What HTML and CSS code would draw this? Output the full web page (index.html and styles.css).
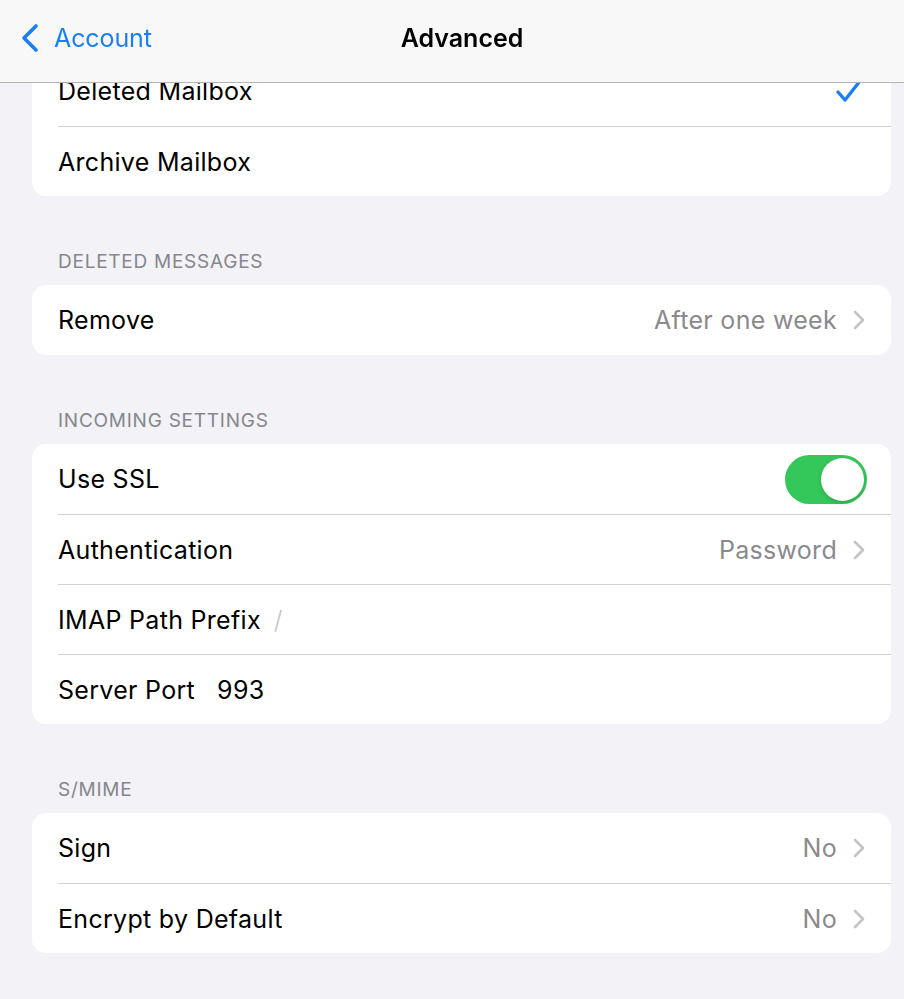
FILE: index.html
```html
<!DOCTYPE html>
<html>
<head>
<meta charset="utf-8">
<link rel="stylesheet" href="styles.css">
</head>
<body>
<header class="navbar">
  <div class="back">
    <svg class="back-icon" width="20" height="30" viewBox="0 0 20 30"><path d="M16 3 L4 15 L16 27" fill="none" stroke="#1a7ff5" stroke-width="3.6" stroke-linecap="round" stroke-linejoin="round"/></svg>
    <span>Account</span>
  </div>
  <div class="title">Advanced</div>
  <div></div>
</header>
<main class="content">
  <section class="card">
    <div class="row"><span class="label">Deleted Mailbox</span><svg class="check" width="28" height="26" viewBox="0 0 28 26"><path d="M3 14 L10 22 L25 3" fill="none" stroke="#1a7ff5" stroke-width="3.4" stroke-linecap="round" stroke-linejoin="round"/></svg></div>
    <div class="row"><span class="label">Archive Mailbox</span></div>
  </section>

  <h2 class="section-title">DELETED MESSAGES</h2>
  <section class="card">
    <div class="row"><span class="label">Remove</span><span class="value">After one week</span><svg class="chev" width="12" height="20" viewBox="0 0 12 20"><path d="M2 2 L10 10 L2 18" fill="none" stroke="#c4c4c7" stroke-width="2.6" stroke-linecap="round" stroke-linejoin="round"/></svg></div>
  </section>

  <h2 class="section-title">INCOMING SETTINGS</h2>
  <section class="card">
    <div class="row"><span class="label">Use SSL</span><span class="toggle"><span class="knob"></span></span></div>
    <div class="row"><span class="label">Authentication</span><span class="value">Password</span><svg class="chev" width="12" height="20" viewBox="0 0 12 20"><path d="M2 2 L10 10 L2 18" fill="none" stroke="#c4c4c7" stroke-width="2.6" stroke-linecap="round" stroke-linejoin="round"/></svg></div>
    <div class="row"><span class="label">IMAP Path Prefix</span><span class="field placeholder">/</span></div>
    <div class="row"><span class="label">Server Port</span><span class="field">993</span></div>
  </section>

  <h2 class="section-title">S/MIME</h2>
  <section class="card">
    <div class="row"><span class="label">Sign</span><span class="value">No</span><svg class="chev" width="12" height="20" viewBox="0 0 12 20"><path d="M2 2 L10 10 L2 18" fill="none" stroke="#c4c4c7" stroke-width="2.6" stroke-linecap="round" stroke-linejoin="round"/></svg></div>
    <div class="row"><span class="label">Encrypt by Default</span><span class="value">No</span><svg class="chev" width="12" height="20" viewBox="0 0 12 20"><path d="M2 2 L10 10 L2 18" fill="none" stroke="#c4c4c7" stroke-width="2.6" stroke-linecap="round" stroke-linejoin="round"/></svg></div>
  </section>
</main>
</body>
</html>
```

FILE: styles.css
```css
* { box-sizing: border-box; }
html, body { margin: 0; padding: 0; }
body {
  background: #f2f2f7;
  font-family: Inter, "Noto Sans", sans-serif;
  color: #000;
  width: 904px;
  height: 999px;
  overflow: hidden;
}
.navbar {
  position: fixed;
  top: 0; left: 0; right: 0;
  height: 83px;
  background: rgba(248, 248, 248, 0.97);
  border-bottom: 1px solid #b5b5b8;
  display: grid;
  grid-template-columns: 1fr auto 1fr;
  align-items: center;
  padding: 0 0 6px 20px;
  z-index: 2;
}
.back {
  display: flex;
  align-items: center;
  gap: 14px;
  color: #1a7ff5;
  font-size: 25px;
  letter-spacing: -0.1px;
}
.title {
  font-size: 25px;
  font-weight: 600;
  letter-spacing: 0;
}
.content {
  padding: 56px 13px 0 32px;
}
.card {
  background: #fff;
  border-radius: 14px;
  overflow: hidden;
}
.row {
  height: 70px;
  margin-left: 26px;
  padding-right: 26px;
  display: flex;
  align-items: center;
  font-size: 25px;
  letter-spacing: 0.3px;
}
.row + .row { border-top: 1px solid #d1d1d6; }
.label { flex: none; }
.value {
  margin-left: auto;
  color: #8a8a8e;
}
.chev { margin-left: 16px; flex: none; }
.check { margin-left: auto; margin-right: 2px; }
.field { margin-left: 22px; }
.field.placeholder { margin-left: 13px; color: #c4c4c7; font-weight: 300; }
.section-title {
  margin: 0;
  padding: 55px 0 12px 26px;
  font-size: 19px;
  line-height: 22px;
  font-weight: 400;
  color: #86868b;
  letter-spacing: 0.75px;
}
.toggle {
  margin-left: auto;
  margin-right: -2px;
  width: 82px;
  height: 49px;
  border-radius: 25px;
  background: #34c759;
  display: flex;
  align-items: center;
  justify-content: flex-end;
  padding-right: 3px;
}
.knob {
  width: 43px;
  height: 43px;
  border-radius: 50%;
  background: #fff;
  box-shadow: 0 2px 4px rgba(0,0,0,0.15);
}
```
